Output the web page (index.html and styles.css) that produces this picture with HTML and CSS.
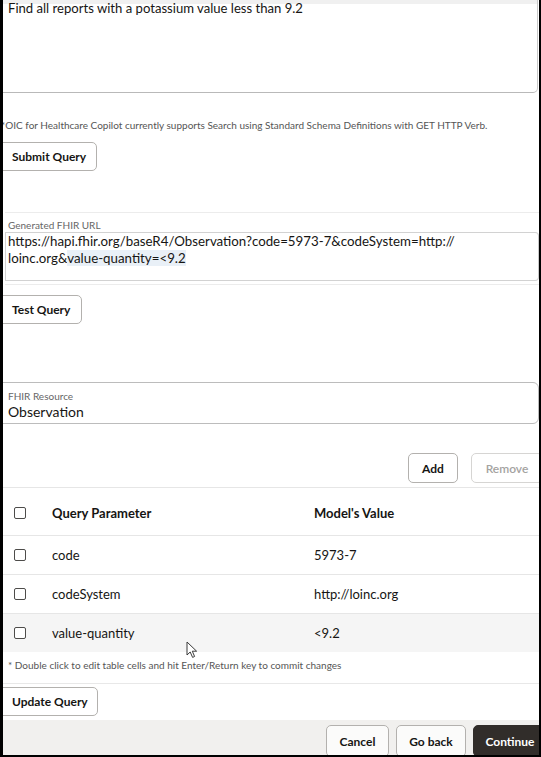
FILE: index.html
```html
<!DOCTYPE html>
<html lang="en">
<head>
<meta charset="utf-8">
<title>FHIR Query</title>
<link rel="stylesheet" href="styles.css">
</head>
<body>
<div class="frame">
  <div class="prompt"><span class="prompt-text">Find all reports with a potassium value less than 9.2</span></div>
  <p class="hint">*OIC for Healthcare Copilot currently supports Search using Standard Schema Definitions with GET HTTP Verb.</p>
  <div class="btn-row submit-row"><button class="btn btn-submit">Submit Query</button></div>

  <div class="url-field">
    <div class="label">Generated FHIR URL</div>
    <div class="url-box">https://hapi.fhir.org/baseR4/Observation?code=5973-7&amp;codeSystem=http://<br>loinc.org&amp;<span class="hl">value-quantity=&lt;9.2</span></div>
  </div>

  <div class="btn-row test-row"><button class="btn btn-test">Test Query</button></div>
  <div class="sep"></div>

  <div class="res-field">
    <div class="label">FHIR Resource</div>
    <div class="value">Observation</div>
  </div>

  <div class="toolbar">
    <button class="btn btn-add">Add</button>
    <button class="btn btn-remove">Remove</button>
  </div>

  <div class="table">
    <div class="row head">
      <div class="c-check"><span class="box"></span></div>
      <div class="c-param">Query Parameter</div>
      <div class="c-val">Model's Value</div>
    </div>
    <div class="row">
      <div class="c-check"><span class="box"></span></div>
      <div class="c-param">code</div>
      <div class="c-val">5973-7</div>
    </div>
    <div class="row">
      <div class="c-check"><span class="box"></span></div>
      <div class="c-param">codeSystem</div>
      <div class="c-val">http://loinc.org</div>
    </div>
    <div class="row hover">
      <div class="c-check"><span class="box"></span></div>
      <div class="c-param">value-quantity</div>
      <div class="c-val">&lt;9.2</div>
    </div>
  </div>

  <p class="hint hint2">* Double click to edit table cells and hit Enter/Return key to commit changes</p>
  <div class="line"></div>
  <div class="btn-row update-row"><button class="btn btn-update">Update Query</button></div>

  <div class="footer">
    <button class="btn fbtn">Cancel</button>
    <button class="btn fbtn">Go back</button>
    <button class="btn fbtn primary">Continue</button>
  </div>

  <svg class="cursor" width="12" height="18" viewBox="0 0 12 18" aria-hidden="true">
    <path d="M1 1 L1 14 L4.2 11 L6.6 16.4 L8.6 15.5 L6.3 10.2 L10.6 10.2 Z" fill="#fff" stroke="#3a3a3a" stroke-width="1" stroke-linejoin="round"/>
  </svg>
</div>
</body>
</html>
```

FILE: styles.css
```css
* { box-sizing: border-box; }
html, body { margin: 0; padding: 0; background: #000; }
body {
  font-family: Lato, "Noto Sans", sans-serif;
  color: #161513;
}
.frame {
  position: relative;
  margin-left: 3px;
  width: 536px;
  height: 755px;
  background: #fff;
  overflow: hidden;
  display: flex;
  flex-direction: column;
}
.prompt {
  flex: none;
  height: 93px;
  margin-left: -2px;
  margin-right: 1px;
  padding-left: 7px;
  border-right: 1px solid #c9c9c9;
  border-bottom: 1px solid #b9b9b9;
  border-bottom-right-radius: 5px;
  background: linear-gradient(#f0f0f0 0, #f0f0f0 4px, #fff 4px);
  font-size: 13.1px;
  line-height: 20px;
}
.prompt-text { display: block; margin-top: -2px; }
.hint {
  margin: 25px 0 0 -2px;
  font-size: 10px;
  line-height: 14px;
  color: #555;
  white-space: nowrap;
}
.btn {
  font-family: inherit;
  font-size: 12px;
  font-weight: 700;
  color: #161513;
  background: #fff;
  border: 1px solid #b3b1ae;
  border-radius: 5px;
  height: 29px;
  padding: 0 12px;
  white-space: nowrap;
  cursor: pointer;
}
.btn-row { display: flex; }
.submit-row { margin-top: 10px; }
.btn-submit { margin-left: -8px; width: 102px; padding-left: 16px; text-align: left; }
.url-field {
  margin-top: 41px;
  margin-left: 2px;
  border-top: 1px solid #ececec;
  border-bottom: 1px solid #ececec;
  padding-bottom: 3px;
}
.label {
  font-size: 10px;
  line-height: 14px;
  color: #666;
  padding-left: 3px;
}
.url-field .label { padding-top: 5px; }
.url-box {
  border: 1px solid #d2d2d2;
  border-right-color: #c9c9c9;
  border-radius: 0 4px 4px 0;
  height: 49px;
  padding: 0 0 0 2px;
  font-size: 13.3px;
  line-height: 17px;
}
.hl { background: #e9f0f7; }
.test-row { margin-top: 10px; }
.btn-test { margin-left: -8px; width: 87px; padding-left: 16px; text-align: left; }
.sep { margin-top: 46px; height: 1px; background: #efefef; }
.res-field {
  flex: none;
  margin-top: 12px;
  margin-left: -1px;
  height: 42px;
  border: 1px solid #bcbcbc;
  border-radius: 0 6px 6px 0;
  padding: 6px 0 0 5px;
}
.res-field .label { padding-left: 0; }
.res-field .value { font-size: 14px; line-height: 18px; }
.toolbar {
  flex: none;
  margin-top: 29px;
  display: flex;
  justify-content: flex-end;
  gap: 13px;
  margin-right: -4px;
}
.btn-add { width: 50px; height: 30px; padding: 0; }
.btn-remove { width: 72px; height: 30px; padding: 0; color: #a4a3a1; border-color: #d6d5d3; font-weight: 600; }
.table { margin-top: 4px; flex: none; }
.row {
  display: flex;
  align-items: center;
  height: 39px;
  border-top: 1px solid #e6e6e6;
  font-size: 13px;
}
.row.head { height: 48px; font-weight: 700; padding-top: 2px; }
.row.hover { background: #f5f5f5; }
.c-check { width: 49px; padding-left: 11px; display: flex; }
.box {
  width: 12px;
  height: 12px;
  border: 1.5px solid #4d4c4a;
  border-radius: 2px;
  background: #fff;
}
.c-param { width: 262px; }
.c-val { flex: 1; }
.hint2 { margin: 6px 0 0 5px; }
.line { flex: none; margin-top: 11px; height: 1px; background: #e8e8e8; }
.update-row { margin-top: 3px; }
.btn-update { margin-left: -8px; width: 103px; padding-left: 16px; text-align: left; }
.footer {
  margin-top: 4px;
  flex: 1;
  background: #f1f0ee;
  display: flex;
  justify-content: flex-end;
  align-items: flex-start;
  gap: 7px;
  padding-top: 5px;
  margin-right: -8px;
}
.fbtn { height: 32px; padding: 0; width: 63px; background: #fbfbfa; }
.fbtn + .fbtn { width: 70px; }
.fbtn.primary { width: 74px; background: #312d2a; border-color: #312d2a; color: #fff; }
.cursor { position: absolute; left: 183px; top: 641px; }
```
